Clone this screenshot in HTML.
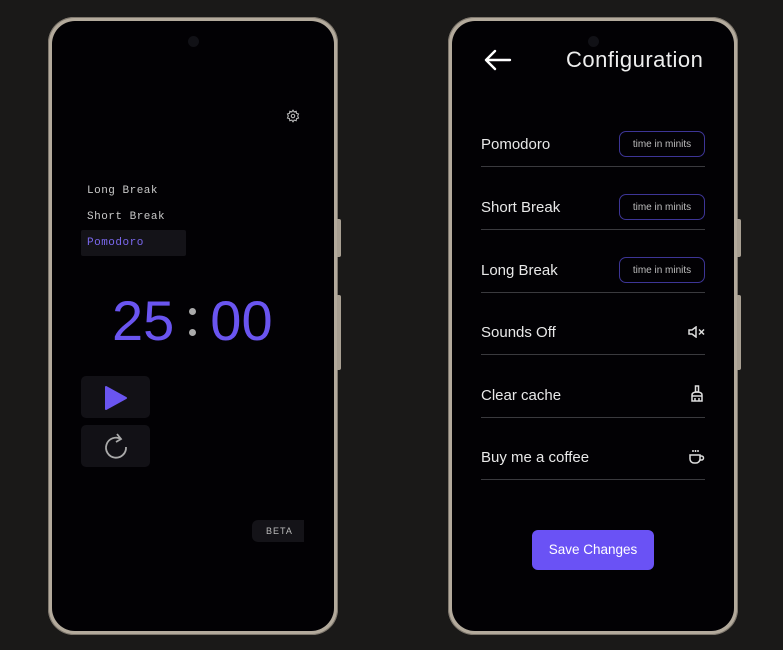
<!DOCTYPE html>
<html><head><meta charset="utf-8"><style>
*{margin:0;padding:0;box-sizing:border-box}
body{width:783px;height:650px;background:#1a1918;position:relative;overflow:hidden;font-family:"Liberation Sans",sans-serif}
.phone{position:absolute;top:17px;width:290px;height:618px;border-radius:26px;background:#b3aa9c;box-shadow:inset 0 0 0 1px #7d766c}
.screen{position:absolute;left:4px;top:4px;right:4px;bottom:4px;border-radius:23px;background:#020104;overflow:hidden}
.btn{position:absolute;width:4px;background:#a89f92;border-radius:0 2px 2px 0}
.cam{position:absolute;left:136px;top:15px;width:11px;height:11px;border-radius:50%;background:#111116}
.mono{font-family:"Liberation Mono",monospace;position:absolute;font-size:11px;color:#c8c8c8;letter-spacing:0.5px}
.row{position:absolute;left:29px;width:224px;height:1px;background:#3a3a3e}
.lbl{position:absolute;left:29px;font-size:15px;color:#e8e8e8}
.inp{position:absolute;left:167px;width:86px;height:26px;border:1px solid #3d3596;border-radius:7px;color:#bdbdbd;font-size:10px;text-align:center;line-height:26px}
</style></head><body>

<div class="phone" style="left:48px">
 <div class="screen">
  <div class="cam"></div>
  <svg style="position:absolute;left:234px;top:88px" width="14" height="14" viewBox="0 0 24 24" fill="none" stroke="#bbb" stroke-width="1.8"><circle cx="12" cy="12" r="3"/><path d="M12 2l2 3 3.5-1 .5 3.5 3.5 1-1.5 3.5 1.5 3.5-3.5 1-.5 3.5-3.5-1-2 3-2-3-3.5 1-.5-3.5-3.5-1 1.5-3.5L2.5 8.5 6 7.5 6.5 4l3.5 1z"/></svg>
  <div class="mono" style="left:35px;top:164px">Long Break</div>
  <div class="mono" style="left:35px;top:190px">Short Break</div>
  <div style="position:absolute;left:29px;top:209px;width:105px;height:26px;background:#141318;border-radius:2px"></div>
  <div class="mono" style="left:35px;top:216px;color:#7b68ee">Pomodoro</div>
  <div style="position:absolute;left:60px;top:270px;font-family:'Liberation Sans',sans-serif;font-size:56px;color:#6a55f0;line-height:60px;white-space:nowrap">25<span style="display:inline-block;width:36px"></span>00</div>
  <div style="position:absolute;left:137px;top:287px;width:7px;height:7px;border-radius:50%;background:#aaa"></div>
  <div style="position:absolute;left:137px;top:308px;width:7px;height:7px;border-radius:50%;background:#aaa"></div>
  <div style="position:absolute;left:29px;top:355px;width:69px;height:42px;background:#121116;border-radius:5px"></div>
  <svg style="position:absolute;left:52px;top:364px" width="24" height="26" viewBox="0 0 24 26"><path d="M2 2L22 13L2 24Z" fill="#6a55f0" stroke="#6a55f0" stroke-width="2" stroke-linejoin="round"/></svg>
  <div style="position:absolute;left:29px;top:404px;width:69px;height:42px;background:#121116;border-radius:5px"></div>
  <svg style="position:absolute;left:50px;top:410px" width="28" height="30" viewBox="0 0 28 30" fill="none" stroke="#aaa" stroke-width="1.8"><path d="M19 8A10 10 0 1 0 24 16"/><path d="M15 3l4 5-5 3"/></svg>
  <div style="position:absolute;left:200px;top:499px;width:52px;height:22px;background:#141318;border-radius:6px 0 0 6px;color:#bbb;font-size:9px;letter-spacing:1px;line-height:22px;padding-left:14px">BETA</div>
 </div>
 <div class="btn" style="left:289px;top:202px;height:38px"></div>
 <div class="btn" style="left:289px;top:278px;height:75px"></div>
</div>

<div class="phone" style="left:448px">
 <div class="screen">
  <div class="cam"></div>
  <svg style="position:absolute;left:32px;top:28px" width="28" height="22" viewBox="0 0 28 22" fill="none" stroke="#fff" stroke-width="2.4" stroke-linecap="round" stroke-linejoin="round"><path d="M26 11H3M11 2L2 11l9 9"/></svg>
  <div style="position:absolute;left:114px;top:26px;font-size:22px;color:#eee;letter-spacing:0.5px">Configuration</div>
  <div class="lbl" style="top:115px">Pomodoro</div><div class="inp" style="top:110px">time in minits</div><div class="row" style="top:145px"></div>
  <div class="lbl" style="top:178px">Short Break</div><div class="inp" style="top:173px">time in minits</div><div class="row" style="top:208px"></div>
  <div class="lbl" style="top:241px">Long Break</div><div class="inp" style="top:236px">time in minits</div><div class="row" style="top:271px"></div>
  <div class="lbl" style="top:303px">Sounds Off</div><div class="row" style="top:333px"></div>
  <svg style="position:absolute;left:236px;top:305px" width="17" height="12" viewBox="0 0 17 12" fill="none" stroke="#ddd" stroke-width="1.5"><path d="M1 4h3l4-3v10L4 8H1z"/><path d="M11 3.5l5 5M16 3.5l-5 5"/></svg>
  <div class="lbl" style="top:366px">Clear cache</div><div class="row" style="top:396px"></div>
  <svg style="position:absolute;left:238px;top:364px" width="14" height="17" viewBox="0 0 14 17" fill="none" stroke="#ddd" stroke-width="1.5"><path d="M5.5 1h3v6h-3z"/><path d="M2 10c0-2 1.5-3 5-3s5 1 5 3v6H2z"/><path d="M5 13v3M9 13v3M2 11h10"/></svg>
  <div class="lbl" style="top:428px">Buy me a coffee</div><div class="row" style="top:458px"></div>
  <svg style="position:absolute;left:236px;top:427px" width="18" height="17" viewBox="0 0 18 17" fill="none" stroke="#ddd" stroke-width="1.5"><path d="M2 7h10v4a4 4 0 0 1-4 4H6a4 4 0 0 1-4-4z"/><path d="M12 8h1.5a2 2 0 0 1 0 4H12"/><path d="M5 2v2M7.5 2v2M10 2v2"/></svg>
  <div style="position:absolute;left:80px;top:509px;width:122px;height:40px;background:#6a52f5;border-radius:6px;color:#fff;font-size:13.5px;text-align:center;line-height:40px">Save Changes</div>
 </div>
 <div class="btn" style="left:289px;top:202px;height:38px"></div>
 <div class="btn" style="left:289px;top:278px;height:75px"></div>
</div>
</body></html>
